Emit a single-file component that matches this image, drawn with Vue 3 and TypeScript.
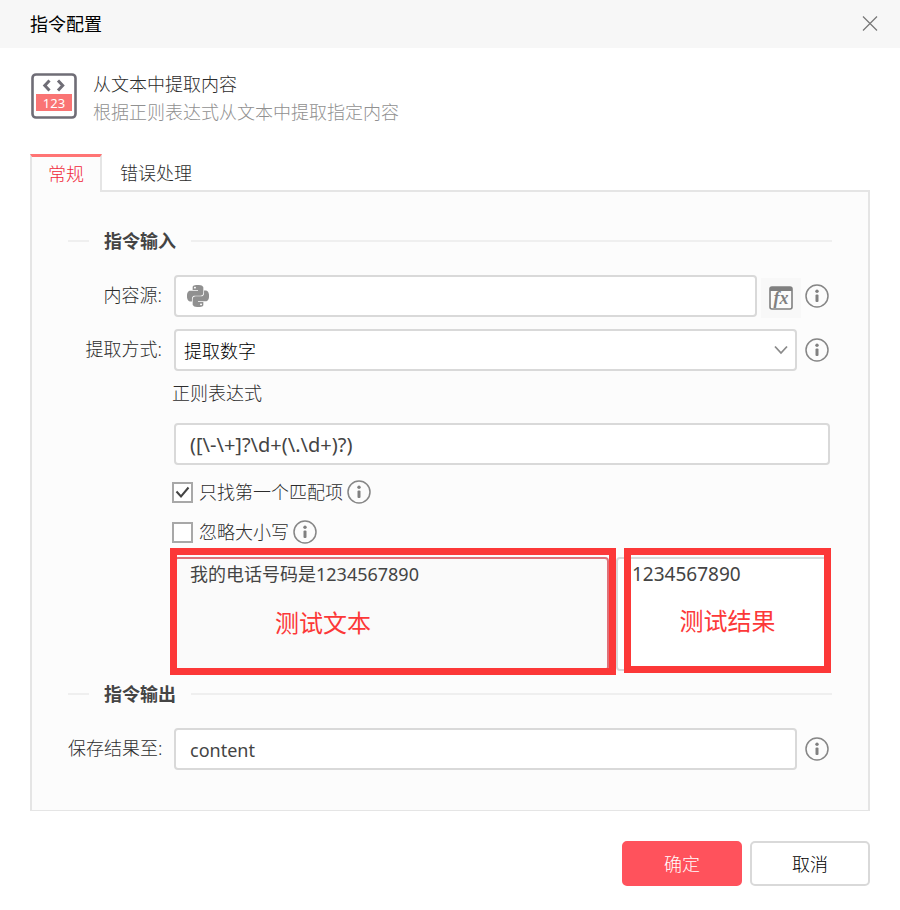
<script setup lang="ts">
import { computed, ref } from 'vue'

type TabKey = 'general' | 'error'

const tabs: { key: TabKey; label: string }[] = [
  { key: 'general', label: '常规' },
  { key: 'error', label: '错误处理' },
]

const activeTab = ref<TabKey>('general')
const source = ref('')
const mode = ref('number')
const pattern = ref('([\\-\\+]?\\d+(\\.\\d+)?)')
const firstOnly = ref(true)
const ignoreCase = ref(false)
const sample = ref('我的电话号码是1234567890')
const output = ref('content')

const result = computed<string>(() => {
  try {
    const flags = (firstOnly.value ? '' : 'g') + (ignoreCase.value ? 'i' : '')
    const found = sample.value.match(new RegExp(pattern.value, flags))
    if (!found) return ''
    return firstOnly.value ? found[0] : found.join('\n')
  } catch {
    return ''
  }
})
</script>

<template>
  <main class="dialog">
    <header class="titlebar">
      <h1 class="titlebar-text">指令配置</h1>
      <button type="button" class="close" aria-label="关闭">
        <svg width="16" height="16" viewBox="0 0 16 16" aria-hidden="true">
          <path d="M1 .5L15 14.5M15 .5L1 14.5" fill="none" stroke="#777" stroke-width="1.2" />
        </svg>
      </button>
    </header>

    <section class="intro">
      <svg class="intro-icon" width="46" height="46" viewBox="0 0 46 46" aria-hidden="true">
        <rect x="1.5" y="1.5" width="43" height="43" rx="3.5" fill="#fff" stroke="#6f6d76" stroke-width="2.6" />
        <path d="M18.5 7.5L13.8 12.5L18.5 17.5M27 7.5L31.7 12.5L27 17.5" fill="none" stroke="#6f6d76" stroke-width="3" />
        <rect x="5" y="21" width="36" height="17" fill="#fa7474" />
        <text class="icon-digits" x="23" y="34.5" text-anchor="middle">123</text>
      </svg>
      <div>
        <h2 class="intro-title">从文本中提取内容</h2>
        <p class="intro-desc">根据正则表达式从文本中提取指定内容</p>
      </div>
    </section>

    <nav class="tabs" role="tablist">
      <button
        v-for="tab in tabs"
        :key="tab.key"
        type="button"
        role="tab"
        class="tab"
        :class="{ active: activeTab === tab.key }"
        :aria-selected="activeTab === tab.key"
        @click="activeTab = tab.key"
      >
        {{ tab.label }}
      </button>
    </nav>

    <form id="config" class="panel" @submit.prevent>
      <h3 class="section">指令输入</h3>

      <div class="row">
        <label class="label" for="source">内容源:</label>
        <div class="source">
          <div class="box icon-box">
            <svg width="22" height="22" viewBox="0 0 24 24" fill="#909090" aria-hidden="true">
              <path d="M14.25.18l.9.2.73.26.59.3.45.32.34.34.25.34.16.33.1.3.04.26.02.2-.01.13V8.5l-.05.63-.13.55-.21.46-.26.38-.3.31-.33.25-.35.19-.35.14-.33.1-.3.07-.26.04-.21.02H8.77l-.69.05-.59.14-.5.22-.41.27-.33.32-.27.35-.2.36-.15.37-.1.35-.07.32-.04.27-.02.21v3.06H3.17l-.21-.03-.28-.07-.32-.12-.35-.18-.36-.26-.36-.36-.35-.46-.32-.59-.28-.73-.21-.88-.14-1.05-.05-1.23.06-1.22.16-1.04.24-.87.32-.71.36-.57.4-.44.42-.33.42-.24.4-.16.36-.1.32-.05.24-.01h.16l.06.01h8.16v-.83H6.18l-.01-2.75-.02-.37.05-.34.11-.31.17-.28.25-.26.31-.23.38-.2.44-.18.51-.15.58-.12.64-.1.71-.06.77-.04.84-.02 1.27.05zm-6.3 1.98l-.23.33-.08.41.08.41.23.34.33.22.41.09.41-.09.33-.22.23-.34.08-.41-.08-.41-.23-.33-.33-.22-.41-.09-.41.09zm13.09 3.95l.28.06.32.12.35.18.36.27.36.35.35.47.32.59.28.73.21.88.14 1.04.05 1.23-.06 1.23-.16 1.04-.24.86-.32.71-.36.57-.4.45-.42.33-.42.24-.4.16-.36.09-.32.05-.24.02-.16-.01h-8.22v.82h5.84l.01 2.76.02.36-.05.34-.11.31-.17.29-.25.25-.31.24-.38.2-.44.17-.51.15-.58.13-.64.09-.71.07-.77.04-.84.01-1.27-.04-1.07-.14-.9-.2-.73-.25-.59-.3-.45-.33-.34-.34-.25-.34-.16-.33-.1-.3-.04-.25-.02-.2.01-.13v-5.34l.05-.64.13-.54.21-.46.26-.38.3-.32.33-.24.35-.2.35-.14.33-.1.3-.06.26-.04.21-.02.13-.01h5.84l.69-.05.59-.14.5-.21.41-.28.33-.32.27-.35.2-.36.15-.36.1-.35.07-.32.04-.28.02-.21V6.07h2.09l.14.01zm-6.47 14.25l-.23.33-.08.41.08.41.23.33.33.23.41.08.41-.08.33-.23.23-.33.08-.41-.08-.41-.23-.33-.33-.23-.41-.08-.41.08z" />
            </svg>
            <input id="source" v-model="source" class="bare" type="text" />
          </div>
          <button type="button" class="fx" aria-label="表达式">
            <svg width="24" height="24" viewBox="0 0 24 24" aria-hidden="true">
              <rect x="1" y="1" width="22" height="22" rx="2" fill="#fbfbfb" stroke="#808080" stroke-width="1.6" />
              <path d="M1 1H23V5H1Z" fill="#808080" />
              <text class="icon-fx" x="12" y="18" text-anchor="middle">fx</text>
            </svg>
          </button>
        </div>
        <button type="button" class="info" aria-label="内容源说明">
          <svg width="24" height="24" viewBox="0 0 24 24" aria-hidden="true">
            <circle cx="12" cy="12" r="11" fill="none" stroke="#868686" stroke-width="1.5" />
            <circle cx="12" cy="7.3" r="1.7" fill="#808080" />
            <rect x="10.5" y="10.5" width="3" height="7.5" rx="1" fill="#808080" />
          </svg>
        </button>
      </div>

      <div class="row">
        <label class="label" for="mode">提取方式:</label>
        <div class="select-wrap">
          <select id="mode" v-model="mode" class="box select">
            <option value="number">提取数字</option>
          </select>
          <svg class="chevron" width="14" height="10" viewBox="0 0 14 10" aria-hidden="true">
            <path d="M1 1.5L7 8L13 1.5" fill="none" stroke="#8a8a8a" stroke-width="1.8" />
          </svg>
        </div>
        <button type="button" class="info" aria-label="提取方式说明">
          <svg width="24" height="24" viewBox="0 0 24 24" aria-hidden="true">
            <circle cx="12" cy="12" r="11" fill="none" stroke="#868686" stroke-width="1.5" />
            <circle cx="12" cy="7.3" r="1.7" fill="#808080" />
            <rect x="10.5" y="10.5" width="3" height="7.5" rx="1" fill="#808080" />
          </svg>
        </button>
      </div>

      <div class="detail">
        <label class="detail-label" for="pattern">正则表达式</label>
        <input id="pattern" v-model="pattern" class="box text pattern" type="text" />

        <div class="checks">
          <div class="check-row">
            <label class="check">
              <span class="tick">
                <input v-model="firstOnly" class="tick-input" type="checkbox" />
                <svg v-if="firstOnly" class="tick-mark" width="21" height="21" viewBox="0 0 21 21" aria-hidden="true">
                  <path d="M4.5 9.5L9 14.5L16.5 5.5" fill="none" stroke="#444" stroke-width="2" />
                </svg>
              </span>
              只找第一个匹配项
            </label>
            <button type="button" class="info" aria-label="只找第一个匹配项说明">
              <svg width="24" height="24" viewBox="0 0 24 24" aria-hidden="true">
                <circle cx="12" cy="12" r="11" fill="none" stroke="#868686" stroke-width="1.5" />
                <circle cx="12" cy="7.3" r="1.7" fill="#808080" />
                <rect x="10.5" y="10.5" width="3" height="7.5" rx="1" fill="#808080" />
              </svg>
            </button>
          </div>

          <div class="check-row">
            <label class="check">
              <span class="tick">
                <input v-model="ignoreCase" class="tick-input" type="checkbox" />
                <svg v-if="ignoreCase" class="tick-mark" width="21" height="21" viewBox="0 0 21 21" aria-hidden="true">
                  <path d="M4.5 9.5L9 14.5L16.5 5.5" fill="none" stroke="#444" stroke-width="2" />
                </svg>
              </span>
              忽略大小写
            </label>
            <button type="button" class="info" aria-label="忽略大小写说明">
              <svg width="24" height="24" viewBox="0 0 24 24" aria-hidden="true">
                <circle cx="12" cy="12" r="11" fill="none" stroke="#868686" stroke-width="1.5" />
                <circle cx="12" cy="7.3" r="1.7" fill="#808080" />
                <rect x="10.5" y="10.5" width="3" height="7.5" rx="1" fill="#808080" />
              </svg>
            </button>
          </div>
        </div>

        <div class="test">
          <div class="test-cell">
            <textarea v-model="sample" class="box area sample" aria-label="测试文本"></textarea>
            <div class="mark mark-sample">测试文本</div>
          </div>
          <div class="test-cell">
            <textarea :value="result" class="box area result" readonly aria-label="测试结果"></textarea>
            <div class="mark mark-result">测试结果</div>
          </div>
        </div>
      </div>

      <h3 class="section">指令输出</h3>

      <div class="row">
        <label class="label" for="output">保存结果至:</label>
        <input id="output" v-model="output" class="box text" type="text" />
        <button type="button" class="info" aria-label="保存结果说明">
          <svg width="24" height="24" viewBox="0 0 24 24" aria-hidden="true">
            <circle cx="12" cy="12" r="11" fill="none" stroke="#868686" stroke-width="1.5" />
            <circle cx="12" cy="7.3" r="1.7" fill="#808080" />
            <rect x="10.5" y="10.5" width="3" height="7.5" rx="1" fill="#808080" />
          </svg>
        </button>
      </div>
    </form>

    <footer class="actions">
      <button type="submit" form="config" class="btn primary">确定</button>
      <button type="button" class="btn">取消</button>
    </footer>
  </main>
</template>

<style>
body {
  background: #fff;
}
</style>

<style scoped>
.dialog,
.dialog * {
  box-sizing: border-box;
}

.dialog {
  color: #2c2c2c;
  font-family: "Noto Sans", "Noto Sans CJK SC", sans-serif;
  font-size: 18px;
  font-weight: 300;
  line-height: 28px;
}

button,
input,
select,
textarea {
  margin: 0;
  font: inherit;
  color: inherit;
}

h1,
h2,
h3,
p {
  margin: 0;
  font-size: inherit;
  font-weight: inherit;
}

svg {
  display: block;
  flex: none;
}

.titlebar {
  display: flex;
  align-items: center;
  justify-content: space-between;
  height: 48px;
  padding: 0 22px 0 30px;
  background: #f7f7f7;
}

.titlebar-text {
  color: #000;
  font-weight: 400;
}

.close,
.info,
.fx {
  flex: none;
  padding: 0;
  border: 0;
  background: none;
}

.intro {
  display: flex;
  align-items: flex-start;
  gap: 16px;
  padding: 22px 31px 0;
}

.intro-icon {
  margin-top: 3px;
}

.intro-desc {
  color: #909090;
}

.icon-digits {
  fill: #fff;
  font-size: 13px;
  font-weight: 400;
}

.icon-fx {
  fill: #808080;
  font: italic bold 18px "Liberation Serif", serif;
}

.tabs {
  display: flex;
  margin: 28px 30px 0;
}

.tab {
  height: 38px;
  padding: 0 18px;
  border: 0;
  background: none;
}

.tab.active {
  z-index: 1;
  padding: 0 16px 2px;
  border: 2px solid #e5e5e5;
  border-top: 3px solid #ff7474;
  border-bottom: 0;
  background: #fcfcfc;
  color: #f0283a;
}

.panel {
  margin: -2px 30px 0;
  padding: 35px 38px 28px 36px;
  border: 2px solid #e5e5e5;
  border-bottom-width: 1px;
  background: #fcfcfc;
}

.section {
  display: flex;
  align-items: center;
  gap: 15px;
  margin: 0 -2px 20px 0;
  color: #444;
  font-weight: 700;
}

.section::before,
.section::after {
  content: "";
  width: 21px;
  height: 2px;
  background: #efefef;
}

.section::after {
  flex: 1;
}

.row {
  display: flex;
  align-items: center;
  height: 42px;
  margin-bottom: 12px;
}

.label {
  flex: none;
  width: 94px;
  margin-right: 12px;
  padding-bottom: 2px;
  text-align: right;
  white-space: nowrap;
}

.row .info {
  width: 25px;
  margin-left: 8px;
}

.box {
  flex: 1;
  width: 100%;
  min-width: 0;
  height: 42px;
  border: 2px solid #d9d9d9;
  border-radius: 4px;
  background: #fff;
  outline: 0;
}

.text {
  padding: 2px 14px 0;
  color: #444;
  font-weight: 400;
}

.pattern {
  padding-top: 0;
  font-size: 20px;
}

.source {
  display: flex;
  flex: 1;
  align-items: center;
  gap: 4px;
  min-width: 0;
  height: 42px;
}

.row .source + .info {
  margin-left: 4px;
}

.icon-box {
  display: flex;
  align-items: center;
  gap: 8px;
  padding: 0 11px;
}

.bare {
  flex: 1;
  min-width: 0;
  padding: 0;
  border: 0;
  outline: 0;
  background: none;
}

.fx {
  display: grid;
  place-items: center;
  width: 40px;
  height: 40px;
  margin-top: 4px;
  background: #f8f8f8;
}

.select-wrap {
  display: grid;
  flex: 1;
  align-items: center;
  min-width: 0;
}

.select {
  grid-area: 1 / 1;
  padding: 2px 32px 0 8px;
  appearance: none;
  color: #000;
}

.chevron {
  grid-area: 1 / 1;
  justify-self: end;
  margin-right: 9px;
  pointer-events: none;
}

.detail {
  margin-left: 106px;
}

.detail-label {
  display: block;
  margin: -4px 0 16px -2px;
}

.checks {
  display: grid;
  gap: 12px;
  margin: 13px 0 0 -2px;
}

.check-row {
  display: flex;
  align-items: center;
  gap: 4px;
  height: 28px;
}

.check {
  display: flex;
  align-items: center;
  gap: 6px;
}

.tick {
  display: grid;
}

.tick-input {
  grid-area: 1 / 1;
  width: 21px;
  height: 21px;
  border: 2px solid #a8a8a8;
  appearance: none;
  background: #fff;
}

.tick-mark {
  grid-area: 1 / 1;
  pointer-events: none;
}

.test {
  display: grid;
  grid-template-columns: 435fr 214fr;
  gap: 7px;
  margin: 11px 0 9px;
}

.test-cell {
  position: relative;
}

.area {
  display: block;
  height: 114px;
  padding: 1px 14px;
  color: #444;
  font-weight: 400;
  resize: none;
}

.sample {
  border-color: #e07078;
  background: #fafafa;
}

.result {
  font-size: 19px;
}

/* Callout frames laid over the two test areas. */
.mark {
  position: absolute;
  display: grid;
  place-items: center;
  border: 7px solid #fc3838;
  color: #fc3838;
  font-size: 24px;
  font-weight: 400;
  line-height: 32px;
  pointer-events: none;
}

.mark-sample {
  inset: -9px -7px -4px -4px;
  padding: 22px 140px 0 0;
}

.mark-result {
  inset: -9px -1px -2px 8px;
  padding-top: 20px;
}

.actions {
  display: flex;
  justify-content: flex-end;
  gap: 8px;
  padding: 30px 30px 24px;
}

.btn {
  width: 120px;
  height: 45px;
  border: 2px solid #d9d9d9;
  border-radius: 5px;
  background: #fff;
  color: #000;
}

.primary {
  border-color: #ff525c;
  background: #ff525c;
  color: #fff;
}
</style>
